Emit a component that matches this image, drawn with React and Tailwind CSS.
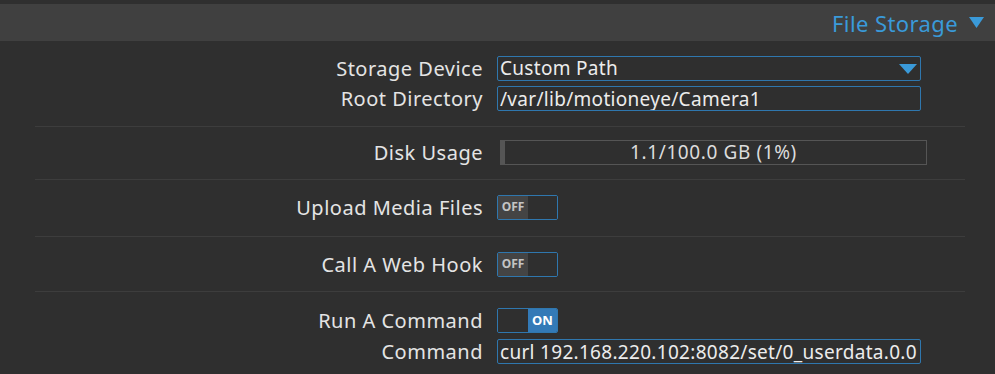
import { useState } from "react";

function Toggle({ on, onChange }) {
  return (
    <button
      type="button"
      onClick={() => onChange(!on)}
      className="flex h-[25px] w-[61px] border border-[#2f77ae] rounded-[2px] overflow-hidden"
    >
      {on ? (
        <>
          <span className="w-[30px] h-full bg-[#2f2f2f]" />
          <span className="flex-1 h-full bg-[#337ab7] flex items-center justify-center text-[13px] font-bold text-white">
            ON
          </span>
        </>
      ) : (
        <>
          <span className="w-[30px] h-full bg-[#444444] flex items-center justify-center pb-[2px] text-[12px] font-bold text-[#c4c4c4]">
            OFF
          </span>
          <span className="flex-1 h-full bg-[#2f2f2f]" />
        </>
      )}
    </button>
  );
}

function Label({ children }) {
  return (
    <div className="text-right text-[20px] tracking-[0.5px] leading-[25px] text-[#e4e4e4]">{children}</div>
  );
}

const inputCls =
  "h-[25px] w-[424px] bg-[#2f2f2f] border border-[#2f77ae] rounded-[2px] px-[2px] text-[19px] tracking-[0.3px] leading-[23px] text-[#ececec] outline-none";

export default function App() {
  const [upload, setUpload] = useState(false);
  const [hook, setHook] = useState(false);
  const [command, setCommand] = useState(true);
  const [root, setRoot] = useState("/var/lib/motioneye/Camera1");
  const [cmd, setCmd] = useState("curl 192.168.220.102:8082/set/0_userdata.0.0");

  return (
    <div className="min-h-screen bg-[#2f2f2f] pt-[4px] font-['Noto_Sans',sans-serif]">
      <div className="h-[37px] bg-[#404040] flex items-center justify-end pr-[11px] gap-[11px]">
        <span className="text-[22px] tracking-[0.4px] text-[#3a9ad9] leading-none">File Storage</span>
        <svg width="15" height="11" viewBox="0 0 15 11">
          <polygon points="0,0 15,0 7.5,11" fill="#3a9ad9" />
        </svg>
      </div>

      <div className="pl-[35px] pr-[30px]">
        <div className="grid grid-cols-[448px_auto] gap-x-[14px] gap-y-[5px] pt-[15px] pb-[15px]">
          <Label>Storage Device</Label>
          <div className={inputCls + " flex items-center justify-between pr-[3px]"}>
            <span>Custom Path</span>
            <svg width="18" height="10" viewBox="0 0 18 10">
              <polygon points="0,0 18,0 9,10" fill="#3a9ad9" />
            </svg>
          </div>
          <Label>Root Directory</Label>
          <input className={inputCls} value={root} onChange={(e) => setRoot(e.target.value)} />
        </div>

        <div className="border-t border-[#3d3d3d]" />

        <div className="grid grid-cols-[448px_auto] gap-x-[14px] pt-[13px] pb-[14px]">
          <Label>Disk Usage</Label>
          <div className="ml-[3px] h-[25px] w-[427px] border border-[#555555] relative flex items-center justify-center">
            <div className="absolute left-0 top-0 bottom-0 w-[1%] bg-[#555555]" />
            <span className="text-[19px] tracking-[0.6px] text-[#dcdcdc]">1.1/100.0 GB (1%)</span>
          </div>
        </div>

        <div className="border-t border-[#3d3d3d]" />

        <div className="grid grid-cols-[448px_auto] gap-x-[14px] pt-[15px] pb-[16px]">
          <Label>Upload Media Files</Label>
          <Toggle on={upload} onChange={setUpload} />
        </div>

        <div className="border-t border-[#3d3d3d]" />

        <div className="grid grid-cols-[448px_auto] gap-x-[14px] pt-[15px] pb-[14px]">
          <Label>Call A Web Hook</Label>
          <Toggle on={hook} onChange={setHook} />
        </div>

        <div className="border-t border-[#3d3d3d]" />

        <div className="grid grid-cols-[448px_auto] gap-x-[14px] gap-y-[6px] pt-[16px] pb-[15px]">
          <Label>Run A Command</Label>
          <Toggle on={command} onChange={setCommand} />
          <Label>Command</Label>
          <input className={inputCls} value={cmd} onChange={(e) => setCmd(e.target.value)} />
        </div>
      </div>
    </div>
  );
}
